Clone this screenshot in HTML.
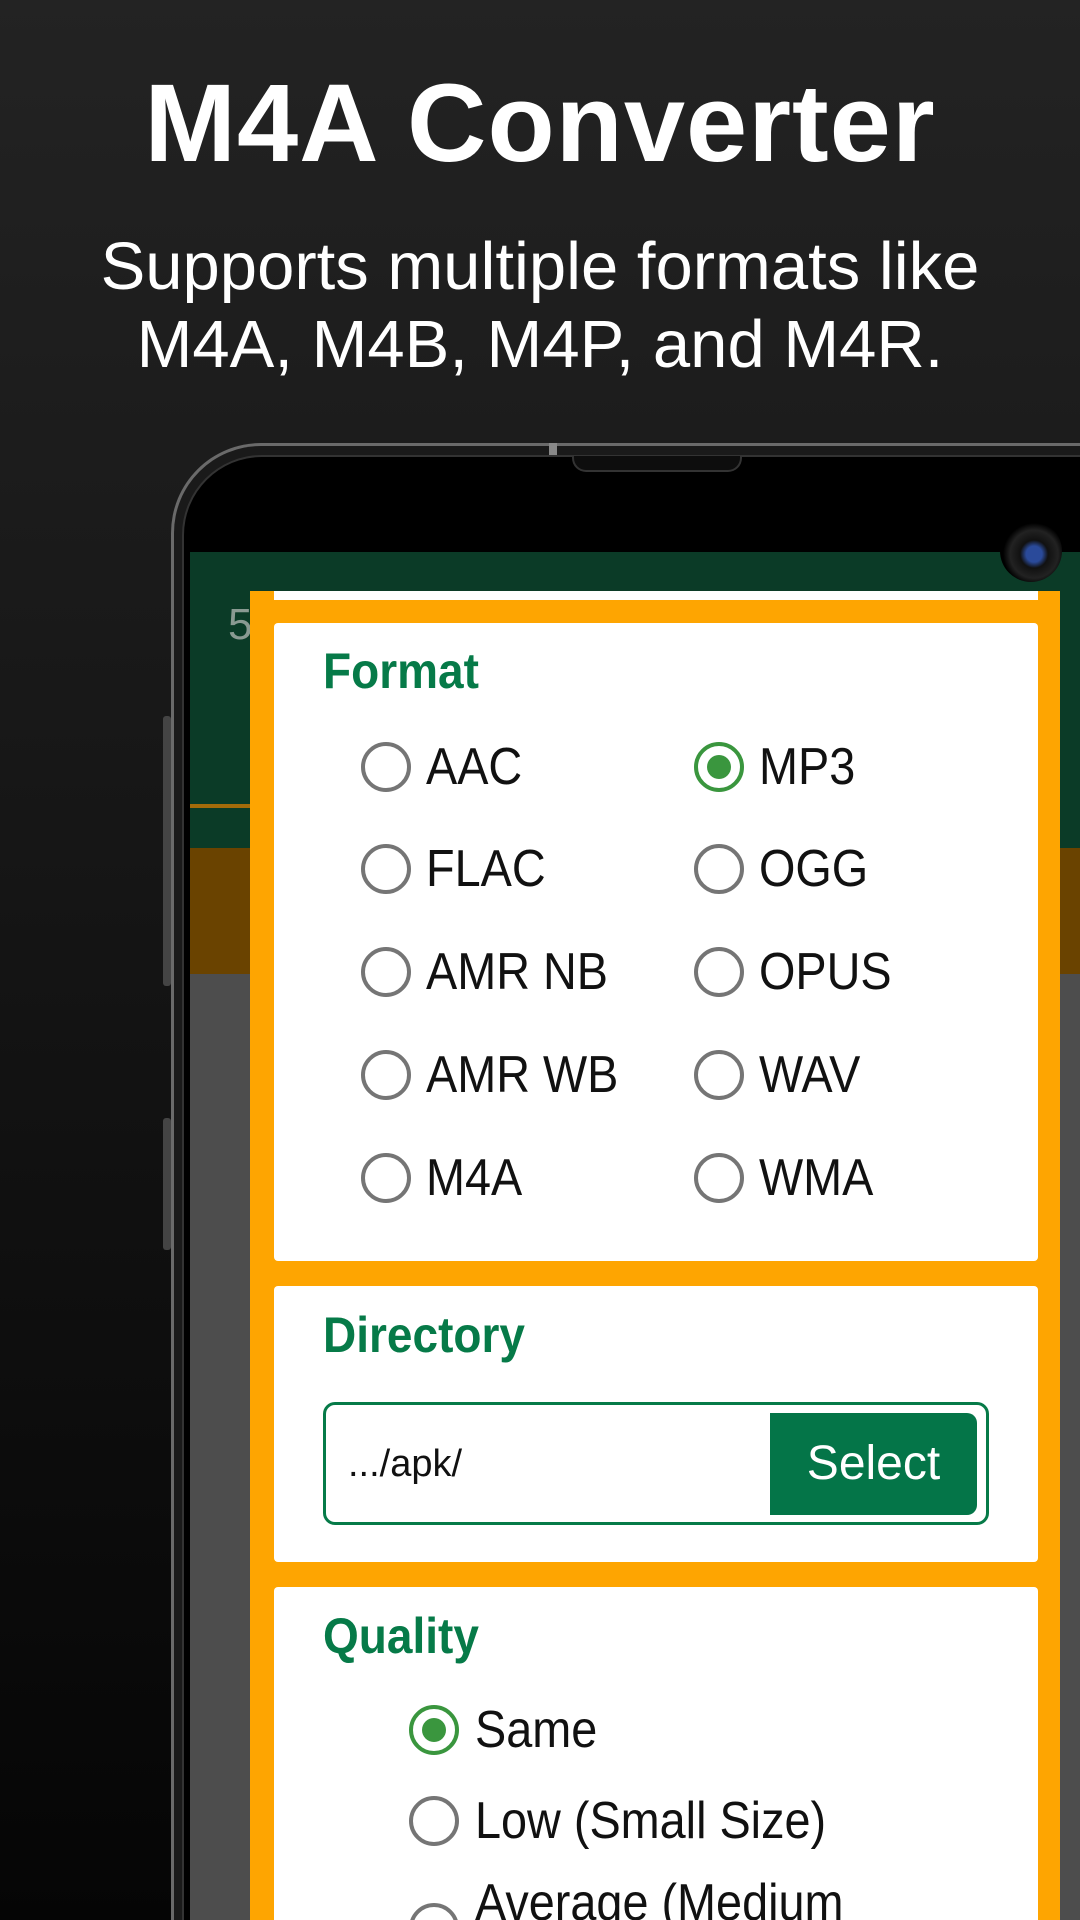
<!DOCTYPE html>
<html><head><meta charset="utf-8"><style>
*{margin:0;padding:0;box-sizing:border-box}
html,body{width:1080px;height:1920px;overflow:hidden}
#w{position:relative;width:1080px;height:1920px;overflow:hidden;background:linear-gradient(180deg,#232323 0%,#141414 50%,#050505 100%);font-family:"Liberation Sans",sans-serif}
.a{position:absolute}
h1{position:absolute;top:60px;width:100%;text-align:center;color:#fff;font-size:110px;font-weight:bold;letter-spacing:1px}
.sub{position:absolute;top:228px;width:100%;text-align:center;color:#fff;font-size:67px;line-height:78px}
.lbl{position:absolute;color:#067a48;font-weight:bold;font-size:50px;transform:scaleX(.92);transform-origin:left}
.r{position:absolute;width:50px;height:50px;border:4px solid #757575;border-radius:50%}
.r.on{border-color:#3a963e}
.r.on::after{content:"";position:absolute;left:9px;top:9px;width:24px;height:24px;border-radius:50%;background:#3a963e}
.t{position:absolute;font-size:52px;color:#111;transform:scaleX(.9);transform-origin:left}
.card{position:absolute;left:274px;width:764px;background:#fff;border-radius:4px}
</style></head><body><div id="w">
<h1>M4A Converter</h1>
<div class="sub">Supports multiple formats like<br>M4A, M4B, M4P, and M4R.</div>
<div class="a" style="left:171px;top:443px;width:909px;height:1477px;border-radius:90px 0 0 0;background:#1a1a1a;border:3px solid #6a6a6a;border-right:none;border-bottom:none"></div>
<div class="a" style="left:182px;top:455px;width:898px;height:1465px;border-radius:80px 0 0 0;background:#000;border:2px solid #333;border-right:none;border-bottom:none"></div>
<div class="a" style="left:572px;top:456px;width:170px;height:16px;border-radius:0 0 14px 14px;background:#0d0d0d;border:2px solid #333;border-top:none"></div>
<div class="a" style="left:549px;top:443px;width:8px;height:12px;background:#888"></div>
<div class="a" style="left:163px;top:716px;width:8px;height:270px;background:#444;border-radius:3px"></div>
<div class="a" style="left:163px;top:1118px;width:8px;height:132px;background:#444;border-radius:3px"></div>
<div class="a" style="left:190px;top:552px;width:890px;height:296px;background:#0b3b27"></div>
<div class="a" style="left:190px;top:804px;width:60px;height:4px;background:#a46b0a"></div>
<div class="a" style="left:190px;top:848px;width:890px;height:126px;background:#6a4300"></div>
<div class="a" style="left:190px;top:974px;width:890px;height:946px;background:#4d4d4d"></div>
<div class="a" style="left:228px;top:600px;color:#8a9a92;font-size:44px">5</div>
<div class="a" style="left:1000px;top:520px;width:62px;height:62px;border-radius:50%;background:radial-gradient(circle at 55% 55%,#2a4a9a 0 8px,#111 14px,#222 24px,#000 31px)"></div>
<div class="a" style="left:250px;top:591px;width:810px;height:1329px;background:#fea501"></div>
<div class="a" style="left:274px;top:591px;width:764px;height:9px;background:#fff"></div>
<div class="card" style="top:623px;height:638px"></div>
<div class="lbl" style="left:323px;top:642px">Format</div>
<div class="r" style="left:361px;top:742px"></div><div class="t" style="left:426px;top:737px">AAC</div>
<div class="r on" style="left:694px;top:742px"></div><div class="t" style="left:759px;top:737px">MP3</div>
<div class="r" style="left:361px;top:844px"></div><div class="t" style="left:426px;top:839px">FLAC</div>
<div class="r" style="left:694px;top:844px"></div><div class="t" style="left:759px;top:839px">OGG</div>
<div class="r" style="left:361px;top:947px"></div><div class="t" style="left:426px;top:942px">AMR NB</div>
<div class="r" style="left:694px;top:947px"></div><div class="t" style="left:759px;top:942px">OPUS</div>
<div class="r" style="left:361px;top:1050px"></div><div class="t" style="left:426px;top:1045px">AMR WB</div>
<div class="r" style="left:694px;top:1050px"></div><div class="t" style="left:759px;top:1045px">WAV</div>
<div class="r" style="left:361px;top:1153px"></div><div class="t" style="left:426px;top:1148px">M4A</div>
<div class="r" style="left:694px;top:1153px"></div><div class="t" style="left:759px;top:1148px">WMA</div>
<div class="card" style="top:1286px;height:276px"></div>
<div class="lbl" style="left:323px;top:1306px">Directory</div>
<div class="a" style="left:323px;top:1402px;width:666px;height:123px;border:3px solid #067a48;border-radius:12px"></div>
<div class="a" style="left:348px;top:1443px;font-size:38px;color:#111">.../apk/</div>
<div class="a" style="left:770px;top:1413px;width:207px;height:102px;background:#047548;border-radius:0 10px 10px 0;color:#fff;font-size:48px;text-align:center;line-height:102px">Select</div>
<div class="card" style="top:1587px;height:340px"></div>
<div class="lbl" style="left:323px;top:1607px">Quality</div>
<div class="r on" style="left:409px;top:1705px"></div><div class="t" style="left:475px;top:1700px">Same</div>
<div class="r" style="left:409px;top:1796px"></div><div class="t" style="left:475px;top:1791px">Low (Small Size)</div>
<div class="r" style="left:409px;top:1903px"></div><div class="t" style="left:475px;top:1873px">Average (Medium</div>
</div></body></html>
